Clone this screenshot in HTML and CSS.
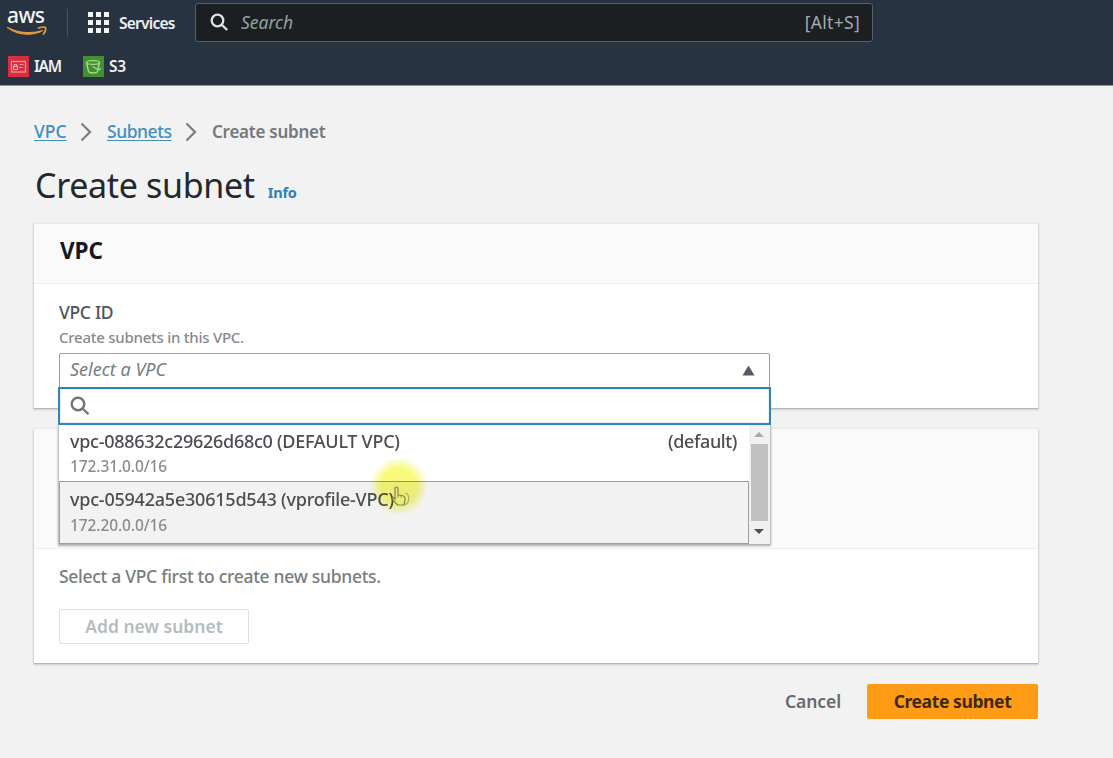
FILE: index.html
```html
<!DOCTYPE html>
<html lang="en">
<head>
<meta charset="utf-8">
<title>Create subnet | VPC Console</title>
<link rel="stylesheet" href="styles.css">
</head>
<body>
<header class="topbar">
  <div class="topbar-main">
    <div class="aws-logo">
      <span class="aws-word">aws</span>
      <svg width="42" height="11" viewBox="0 0 42 11">
        <path d="M.6 1.500C11 9.500 26 10 35.500 4.500 26 8 12 7.500 .6 1.500z" fill="#e09a3e" stroke="#e09a3e" stroke-width="1.300" stroke-linejoin="round"/>
        <path d="M31.500 2C35 1 38 .9 38.500 1.700 39 3.200 38 6 36.500 8" fill="none" stroke="#e09a3e" stroke-width="1.800" stroke-linecap="round"/>
      </svg>
    </div>
    <span class="divider"></span>
    <button class="services">
      <svg width="21" height="21" viewBox="0 0 21 21" fill="#f5f6f7">
        <path d="M0 0h5v5H0zM8 0h5v5H8zM16 0h5v5h-5zM0 8h5v5H0zM8 8h5v5H8zM16 8h5v5h-5zM0 16h5v5H0zM8 16h5v5H8zM16 16h5v5h-5z"/>
      </svg>
      <span class="services-label">Services</span>
    </button>
    <div class="global-search">
      <svg width="19" height="19" viewBox="0 0 19 19" fill="none" stroke="#dfe3e4" stroke-width="2.300"><circle cx="7.500" cy="7.500" r="5.800"/><path d="M11.800 11.800l5.400 5.200"/></svg>
      <span class="global-placeholder">Search</span>
      <span class="shortcut">[Alt+S]</span>
    </div>
  </div>
  <nav class="favorites">
    <a class="favorite">
      <svg width="21" height="21" viewBox="0 0 21 21"><rect width="21" height="21" fill="#d62f3f"/><g fill="none" stroke="#f29ba3" stroke-width="1.200"><rect x="3.500" y="5.500" width="14" height="10.500"/><rect x="5.500" y="10.500" width="4" height="3"/><path d="M6.300 10.500V8.500h2.400v2M11.500 8.500h4M11.500 11.500h3"/></g></svg>
      <span class="iam">IAM</span>
    </a>
    <a class="favorite">
      <svg width="21" height="21" viewBox="0 0 21 21"><rect width="21" height="21" fill="#42902f"/><g fill="none" stroke="#a9d897" stroke-width="1.300"><path d="M3.500 6.500c0-2.500 13-2.500 13 0s-13 2.500-13 0zM3.500 6.500l2 9c1 2 8 2 9 0l2-9"/><path d="M9.500 10.500l5 2.700c2 .8 3.500.3 2.500-1"/></g></svg>
      <span class="s3">S3</span>
    </a>
  </nav>
</header>
<main class="page">
  <nav class="breadcrumb">
    <a class="crumb-vpc">VPC</a>
    <svg width="12" height="20" viewBox="0 0 12 20" fill="none" stroke="#7c8084" stroke-width="2.300"><path d="M1.500 1.500l8.500 8.500-8.500 8.500"/></svg>
    <a class="crumb-subnets">Subnets</a>
    <svg width="12" height="20" viewBox="0 0 12 20" fill="none" stroke="#7c8084" stroke-width="2.300"><path d="M1.500 1.500l8.500 8.500-8.500 8.500"/></svg>
    <span class="crumb-current">Create subnet</span>
  </nav>
  <div class="title-row"><h1>Create subnet</h1><a class="info">Info</a></div>

  <section class="panel vpc-panel">
    <div class="panel-header"><h2>VPC</h2></div>
    <div class="panel-body">
      <div class="label">VPC ID</div>
      <div class="hint">Create subnets in this VPC.</div>
      <div class="select">
        <div class="select-trigger">
          <span class="select-placeholder">Select a VPC</span>
          <svg width="13" height="11" viewBox="0 0 13 11"><path d="M6.500 .5L12.500 10.500H.5z" fill="#545b64"/></svg>
        </div>
        <div class="dropdown">
          <div class="filter">
            <svg width="20" height="20" viewBox="0 0 20 20" fill="none" stroke="#6f7579" stroke-width="2.400"><circle cx="8" cy="8" r="6.300"/><path d="M12.500 12.500l6 5.700"/></svg>
          </div>
          <div class="options">
            <div class="option-list">
              <div class="option">
                <div class="option-main"><span class="id-default">vpc-088632c29626d68c0 (DEFAULT VPC)</span><span class="tag">(default)</span></div>
                <div class="cidr">172.31.0.0/16</div>
              </div>
              <div class="option highlighted">
                <div class="option-main"><span class="id-profile">vpc-05942a5e30615d543 (vprofile-VPC)</span></div>
                <div class="cidr">172.20.0.0/16</div>
              </div>
            </div>
            <div class="scrollbar">
              <svg width="10" height="5" viewBox="0 0 10 5"><path d="M5 0l5 5H0z" fill="#a9a9a9"/></svg>
              <div class="thumb"></div>
              <svg width="10" height="5" viewBox="0 0 10 5"><path d="M5 5l5-5H0z" fill="#505050"/></svg>
            </div>
          </div>
          <div class="pointer-halo"></div>
          <svg class="pointer" width="26" height="24" viewBox="0 0 26 24" fill="none" stroke="#84834a" stroke-width="1.200">
            <path d="M6 14V3.500c0-2 3-2 3 0V10l4 .5 2 .8c1.200.6 1.300 1.500 1 3l-1 5.700H8.500L3.500 14.500c-1-1.500 1-2.500 2.500-.5z"/>
            <path d="M9 10v3M12 10.500v2.500M16 8c5 1 5 9 0 12" stroke-opacity=".6"/>
          </svg>
        </div>
      </div>
    </div>
  </section>

  <section class="panel subnet-panel">
    <div class="panel-header"></div>
    <div class="panel-body">
      <p class="empty">Select a VPC first to create new subnets.</p>
      <button class="add" disabled><span>Add new subnet</span></button>
    </div>
  </section>

  <div class="actions">
    <button class="cancel">Cancel</button>
    <button class="create"><span>Create subnet</span></button>
  </div>
</main>
</body>
</html>
```

FILE: styles.css
```css
* { box-sizing: border-box; }
body {
  margin: 0;
  min-height: 758px;
  background: #f2f2f2;
  color: #16191f;
  font-family: "Noto Sans", "Open Sans", sans-serif;
  font-size: 17.5px;
  overflow: hidden;
  white-space: nowrap;
}
svg { display: block; flex: none; }
button { border: 0; padding: 0; margin: 0; background: none; font: inherit; color: inherit; letter-spacing: inherit; }
h1, h2, p { margin: 0; }

.topbar { height: 86px; background: #283342; border-bottom: 1px solid #8a929b; color: #eef0f2; }
.topbar-main { display: flex; align-items: center; height: 45px; padding-left: 7px; }
.aws-logo { display: flex; flex-direction: column; width: 42px; height: 41px; }
.aws-word { height: 24px; line-height: 27px; font-size: 21px; font-weight: 500; letter-spacing: -0.6px; color: #f3f4f5; }
.divider { width: 1px; height: 28px; margin-left: 18px; background: #48525e; }
.services { display: flex; align-items: center; gap: 10px; width: 127px; padding-left: 20px; font-size: 15.5px; font-weight: 600; }
.services-label { letter-spacing: -0.75px; }
.global-search {
  display: flex; align-items: center; width: 678px; height: 39px; padding: 0 12px 0 14px;
  background: #1b1f21; border: 1px solid #566069; border-radius: 3px;
}
.global-placeholder { margin: -2px 0 0 12px; font-size: 17.5px; font-style: italic; color: #93a1a3; }
.shortcut { margin: -2px 0 0 auto; letter-spacing: 0.3px; color: #a3abab; }
.favorites { display: flex; gap: 22px; height: 41px; padding: 1px 0 0 8px; align-items: center; font-size: 15.5px; font-weight: 600; }
.favorite { display: flex; align-items: center; gap: 5px; }
.iam { width: 27px; letter-spacing: -1.2px; margin-top: -1px; }
.s3 { margin-top: -1px; letter-spacing: -0.4px; }

.page { width: 1038px; padding: 33px 0 0 34px; }
.breadcrumb { display: flex; align-items: center; height: 24px; }
.breadcrumb a { color: #3f8fbf; text-decoration: underline; text-underline-offset: 2px; font-weight: 500; }
.crumb-vpc { width: 33px; }
.crumb-subnets { width: 65px; letter-spacing: -0.45px; }
.breadcrumb svg { margin: 2px 15px 0 13px; }
.crumb-current { color: #73787d; font-weight: 600; font-size: 17px; letter-spacing: -0.25px; }
.title-row { display: flex; align-items: baseline; gap: 13px; height: 81px; padding-top: 18px; }
h1 { margin-left: 1px; font-size: 34px; line-height: 48px; font-weight: 400; letter-spacing: -0.33px; color: #24272b; }
.info { color: #2f80b4; font-size: 14.5px; font-weight: 700; letter-spacing: -0.2px; }

.panel { background: #fff; box-shadow: 0 1px 1px #b5b7b7, 0 1px 2px 1px #d3d5d5; }
.panel-header { background: #fafafa; border-bottom: 1px solid #eeefef; }
.panel-body { padding: 0 25px; }
.vpc-panel { height: 184px; margin-bottom: 21px; }
.vpc-panel .panel-header { height: 60px; padding: 9px 25px 0; }
h2 { margin-left: 1px; font-size: 22.5px; line-height: 36px; font-weight: 700; letter-spacing: -0.1px; }
.label { padding-top: 15px; line-height: 26px; letter-spacing: -0.3px; font-weight: 500; color: #505458; }
.hint { line-height: 24px; font-size: 15px; letter-spacing: -0.25px; font-weight: 500; color: #858a8d; }
.select { position: relative; width: 711px; margin-top: 4px; }
.select-trigger {
  display: flex; justify-content: space-between; align-items: center; height: 36px; padding: 0 14px 1px 10px;
  border: 1px solid #989fa1; border-radius: 2px 2px 0 0;
}
.select-placeholder { margin-top: -3px; font-size: 18px; font-style: italic; color: #777d80; }
.dropdown { position: absolute; z-index: 2; top: 34px; left: -1px; width: 713px; }
.filter { height: 38px; padding: 7px 10px; background: #fff; border: 2px solid #3184b8; box-shadow: inset 0 0 1px #3184b8; }
.options { display: flex; height: 119px; margin: 0 1px; background: #fff; box-shadow: 0 1px 2px 1px #a9adad; clip-path: inset(0 -3px -4px -3px); }
.option-list { width: 690px; }
.option { height: 56px; padding: 2px 12px 0 11px; }
.option-main { display: flex; justify-content: space-between; line-height: 28px; font-size: 18px; letter-spacing: -0.27px; font-weight: 500; color: #4a4e52; }
.id-profile { letter-spacing: -0.22px; }
.tag { letter-spacing: -0.4px; }
.cidr { line-height: 22px; font-size: 15.5px; letter-spacing: -0.1px; font-weight: 500; color: #868c8f; }
.highlighted { height: 63px; padding: 3px 10px 0; background: #f2f2f2; border: 1px solid #989fa1; }
.highlighted .cidr { margin-top: 1px; }
.scrollbar { display: flex; flex-direction: column; align-items: center; width: 21px; padding: 7px 1px 0 0; background: #f1f1f1; }
.thumb { width: 17px; height: 77px; margin: 7px 0 8px; background: #c1c1c1; }
.pointer-halo {
  position: absolute; left: 312px; top: 70px; width: 58px; height: 58px; border-radius: 50%;
  background: radial-gradient(closest-side, #f9f97c 0, #f9f97c 60%, transparent 100%); mix-blend-mode: multiply;
}
.pointer { position: absolute; left: 331px; top: 98px; }

.subnet-panel { height: 234px; }
.subnet-panel .panel-header { height: 120px; }
.empty { padding-top: 14px; line-height: 26px; letter-spacing: -0.29px; font-weight: 500; color: #777d80; }
.add { display: flex; align-items: center; justify-content: center; width: 190px; height: 35px; margin-top: 20px; padding-bottom: 2px; border: 1px solid #dde0e0; border-radius: 2px; color: #b4bcbe; font-weight: 600; }

.actions { display: flex; align-items: center; justify-content: flex-end; gap: 26px; margin-top: 21px; }
.cancel { color: #66696d; font-weight: 600; letter-spacing: -0.1px; }
.create { width: 171px; height: 35px; background: #ff9b14; border-radius: 2px; color: #412908; font-weight: 700; letter-spacing: -0.4px; }
.cancel, .create { padding-bottom: 1px; }
```
